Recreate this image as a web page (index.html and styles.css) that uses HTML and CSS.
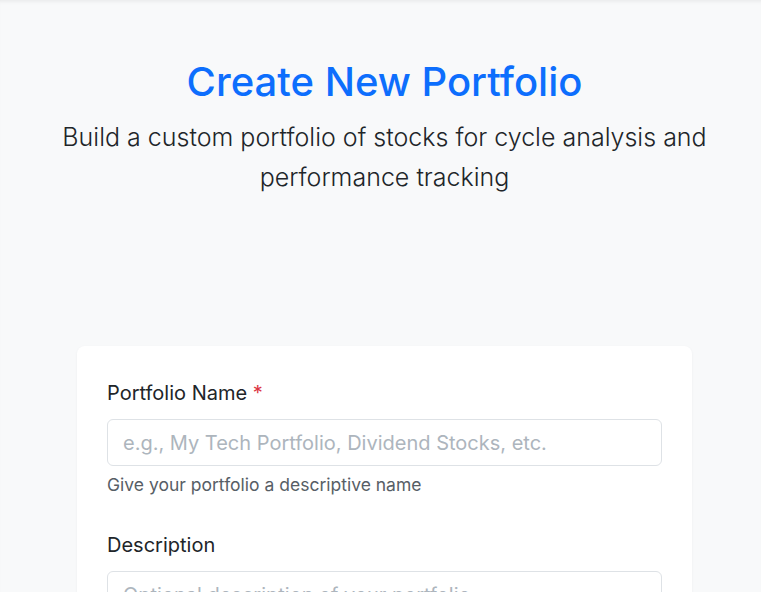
FILE: index.html
```html
<!DOCTYPE html>
<html lang="en">
<head>
<meta charset="utf-8">
<title>Create New Portfolio</title>
<link rel="stylesheet" href="styles.css">
</head>
<body>
<div class="page">
  <header class="hero">
    <h1 class="title">Create New Portfolio</h1>
    <p class="lead">Build a custom portfolio of stocks for cycle analysis and performance tracking</p>
  </header>
  <main class="card">
    <div class="field">
      <label class="label" for="name">Portfolio Name <span class="req">*</span></label>
      <input class="input" id="name" type="text" placeholder="e.g., My Tech Portfolio, Dividend Stocks, etc.">
      <div class="help">Give your portfolio a descriptive name</div>
    </div>
    <div class="field">
      <label class="label" for="desc">Description</label>
      <textarea class="input textarea" id="desc" rows="3" placeholder="Optional description of your portfolio"></textarea>
    </div>
  </main>
</div>
</body>
</html>
```
FILE: styles.css
```css
* { box-sizing: border-box; }
html, body { margin: 0; padding: 0; }
body {
  background: #f8f9fa;
  font-family: Inter, "Noto Sans", sans-serif;
  color: #212529;
  overflow: hidden;
}
.page {
  min-height: 592px;
  box-shadow: inset 0 4px 4px -3px rgba(0,0,0,0.08);
  padding: 58px 0 0 8px;
}
.hero {
  text-align: center;
  padding: 0 40px;
}
.title {
  margin: 0;
  font-size: 40px;
  line-height: 48px;
  font-weight: 500;
  color: #0d6efd;
}
.lead {
  margin: 11px 0 0;
  font-size: 25px;
  line-height: 40px;
  font-weight: 300;
  color: #212529;
}
.card {
  margin: 149px auto 0;
  width: 615px;
  background: #fff;
  border-radius: 8px;
  box-shadow: 0 1px 3px rgba(0,0,0,0.05);
  padding: 32px 30px;
}
.field { margin-bottom: 32px; }
.label {
  display: block;
  font-size: 20px;
  line-height: 30px;
  margin-bottom: 11px;
  color: #212529;
}
.req { color: #dc3545; }
.input {
  display: block;
  width: 100%;
  height: 47px;
  border: 1px solid #dee2e6;
  border-radius: 6px;
  padding: 9px 15px;
  font-family: inherit;
  font-size: 20px;
  color: #212529;
  background: #fff;
}
.input::placeholder { color: #adb5bd; }
.textarea { height: 110px; resize: none; line-height: 28px; }
.help {
  margin-top: 6px;
  font-size: 17.5px;
  line-height: 26px;
  color: #575e66;
}
```
